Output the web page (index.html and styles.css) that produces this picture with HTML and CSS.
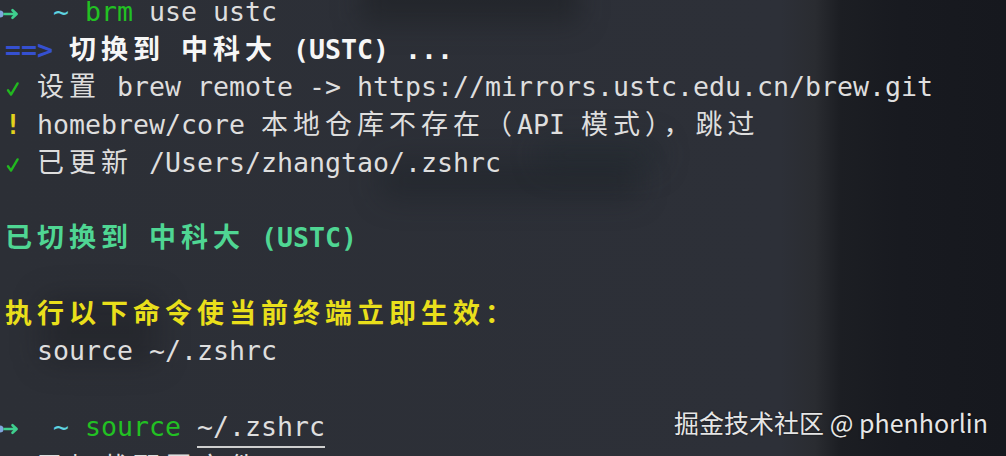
FILE: index.html
```html
<!DOCTYPE html>
<html lang="zh-CN">
<head>
<meta charset="utf-8">
<link rel="stylesheet" href="styles.css">
</head>
<body>
<div class="backdrop">
  <div class="blob b1"></div>
  <div class="blob b2"></div>
  <div class="blob b3"></div>
  <div class="blob b4"></div>
</div>
<main class="term">
  <div class="line"><svg class="prompt" viewBox="0 0 21 16" width="21" height="16"><circle cx="0" cy="8" r="3.6" fill="#7fa6dc"/><path d="M4.5 8H16.5M12.5 4.2L16.6 8L12.5 11.8" fill="none" stroke="#3fcf8e" stroke-width="2.6" stroke-linecap="round" stroke-linejoin="round"/></svg>  <span class="cyan">~</span> <span class="cmd">brm</span> use ustc</div>
  <div class="line bold"><span class="blue">==&gt;</span> <span class="cjk">切换到</span> <span class="cjk">中科大</span> (USTC) ...</div>
  <div class="line"><svg class="check" viewBox="0 0 16 16" width="16" height="16"><path d="M3 9.2L6 13.6L12.6 2.4" fill="none" stroke="#22b820" stroke-width="2.4" stroke-linecap="round" stroke-linejoin="round"/></svg> <span class="cjk">设置</span> brew remote -&gt; https://mirrors.ustc.edu.cn/brew.git</div>
  <div class="line"><span class="cell warn">!</span> homebrew/core <span class="cjk">本地仓库不存在（</span>API <span class="cjk">模式），跳过</span></div>
  <div class="line"><svg class="check" viewBox="0 0 16 16" width="16" height="16"><path d="M3 9.2L6 13.6L12.6 2.4" fill="none" stroke="#22b820" stroke-width="2.4" stroke-linecap="round" stroke-linejoin="round"/></svg> <span class="cjk">已更新</span> /Users/zhangtao/.zshrc</div>
  <div class="line"></div>
  <div class="line bold green"><span class="cjk">已切换到</span> <span class="cjk">中科大</span> (USTC)</div>
  <div class="line"></div>
  <div class="line bold yellow"><span class="cjk">执行以下命令使当前终端立即生效：</span></div>
  <div class="line">  source ~/.zshrc</div>
  <div class="line"></div>
  <div class="line"><svg class="prompt" viewBox="0 0 21 16" width="21" height="16"><circle cx="0" cy="8" r="3.6" fill="#7fa6dc"/><path d="M4.5 8H16.5M12.5 4.2L16.6 8L12.5 11.8" fill="none" stroke="#3fcf8e" stroke-width="2.6" stroke-linecap="round" stroke-linejoin="round"/></svg>  <span class="cyan">~</span> <span class="cmd">source</span> <span class="uline">~/.zshrc</span></div>
  <div class="line last"><svg class="check" viewBox="0 0 16 16" width="16" height="16"><path d="M3 9.2L6 13.6L12.6 2.4" fill="none" stroke="#22b820" stroke-width="2.4" stroke-linecap="round" stroke-linejoin="round"/></svg> <span class="cjk">已加载配置文件</span></div>
</main>
<div class="watermark">掘金技术社区 @ phenhorlin</div>
</body>
</html>
```

FILE: styles.css
```css
html, body {
  margin: 0;
  padding: 0;
  width: 1006px;
  height: 456px;
  overflow: hidden;
}

body {
  position: relative;
  background: linear-gradient(to right,
    #2c2f36 0px,
    #2d3038 780px,
    #2a2c31 815px,
    #1c1e23 840px,
    #181a20 900px,
    #16181e 1006px);
  font-family: "DejaVu Sans Mono", "Liberation Mono", monospace;
  color: #dedede;
}

.backdrop {
  position: absolute;
  inset: 0;
  z-index: 0;
}

.blob {
  position: absolute;
  filter: blur(14px);
  border-radius: 10px;
}

.b1 { left: 360px; top: -24px; width: 220px; height: 48px; background: rgba(22, 24, 28, 0.4); }
.b2 { left: 540px; top: 140px; width: 120px; height: 30px; background: rgba(30, 40, 44, 0.4); }
.b3 { left: 380px; top: 160px; width: 260px; height: 40px; background: rgba(24, 28, 34, 0.35); }
.b4 { left: 40px; top: 295px; width: 120px; height: 70px; background: rgba(22, 24, 28, 0.3); }

.term {
  position: relative;
  z-index: 1;
  margin-top: -7px;
  padding-left: 5px;
  font-size: 26.58px;
}

.line {
  height: 37.7px;
  line-height: 37.7px;
  white-space: pre;
}

.line.last {
  margin-top: 4px;
}

.cjk {
  font-family: "Noto Sans CJK SC", sans-serif;
  font-size: 27px;
  letter-spacing: 5px;
  line-height: 20px;
}

.cell {
  display: inline-block;
  width: 16px;
  text-align: left;
}

.prompt {
  margin-left: -5px;
  vertical-align: -1px;
}

.check {
  vertical-align: -1px;
}

.bold { font-weight: bold; color: #f6f6f6; }
.bold .cjk { font-weight: 700; }

.cyan { color: #5ed3e0; }
.cmd { color: #22c123; }
.blue { color: #3550d0; }
.warn { color: #e3d21c; font-weight: bold; }
.green { color: #4fd693; }
.yellow { color: #e9df1b; }

.uline {
  display: inline-block;
  line-height: 1;
  padding-bottom: 6px;
  border-bottom: 2px solid #cfcfcf;
}

.watermark {
  position: absolute;
  right: 18px;
  top: 404px;
  z-index: 2;
  font-family: "Noto Sans CJK SC", "Noto Sans", sans-serif;
  font-size: 25px;
  line-height: 36px;
  color: #e6e6e6;
  text-shadow: 0 0 2px rgba(0, 0, 0, 0.7);
  white-space: nowrap;
}
```
